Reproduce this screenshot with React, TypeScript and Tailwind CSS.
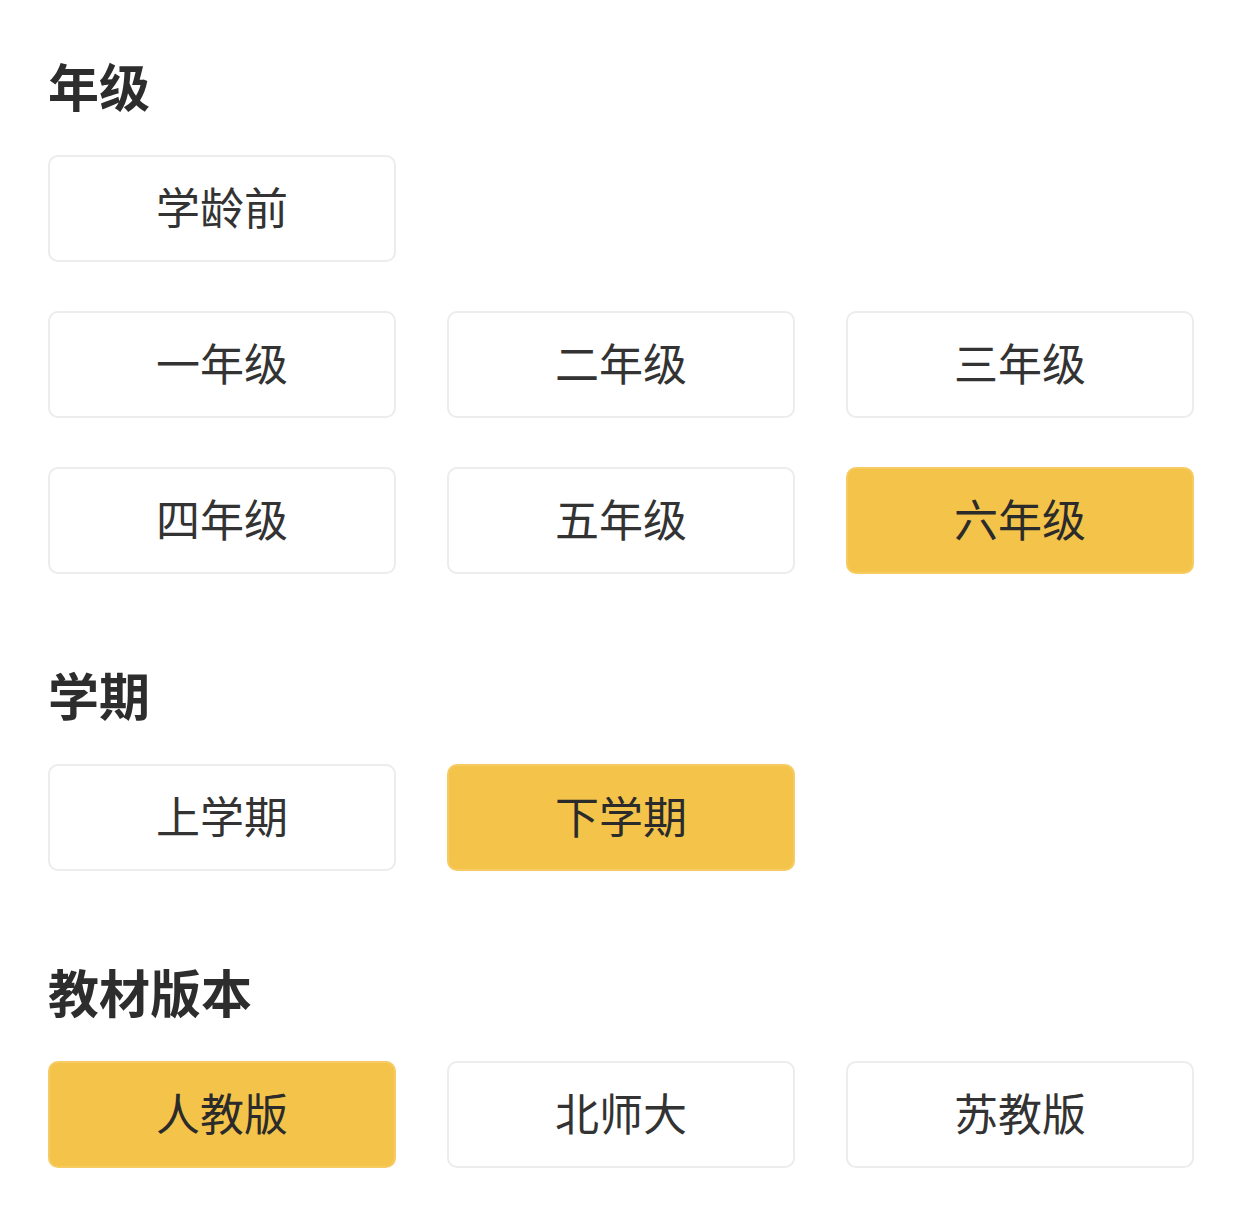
import { useState } from "react";

const GRADES = ["学龄前", null, null, "一年级", "二年级", "三年级", "四年级", "五年级", "六年级"];
const TERMS = ["上学期", "下学期"];
const EDITIONS = ["人教版", "北师大", "苏教版"];

function Option({ label, active, onClick }: { label: string; active: boolean; onClick: () => void }) {
  return (
    <button
      type="button"
      onClick={onClick}
      className={
        active
          ? "h-[107px] pb-[5px] rounded-[10px] border-2 border-[#f6cb63] bg-[#f4c34a] text-[44px] leading-none text-[#2b2b2b]"
          : "h-[107px] pb-[5px] rounded-[10px] border-2 border-[#ececec] bg-white text-[44px] leading-none text-[#333]"
      }
    >
      {label}
    </button>
  );
}

function Section({ title, children }: { title: string; children: React.ReactNode }) {
  return (
    <section className="flex flex-col gap-[43px]">
      <h2 className="pb-[4px] text-[51px] leading-[46px] font-bold text-[#2d2d2d]">{title}</h2>
      <div className="grid grid-cols-3 gap-x-[51px] gap-y-[49px]">{children}</div>
    </section>
  );
}

export default function App() {
  const [grade, setGrade] = useState("六年级");
  const [term, setTerm] = useState("下学期");
  const [edition, setEdition] = useState("人教版");

  return (
    <div
      className="min-h-[1206px] bg-white px-[48px] pt-[62px] flex flex-col gap-[97px]"
      style={{ fontFamily: '"Noto Sans CJK SC", "Noto Sans", sans-serif' }}
    >
      <Section title="年级">
        {GRADES.map((g, i) =>
          g ? <Option key={g} label={g} active={grade === g} onClick={() => setGrade(g)} /> : <div key={i} />
        )}
      </Section>
      <Section title="学期">
        {TERMS.map((t) => (
          <Option key={t} label={t} active={term === t} onClick={() => setTerm(t)} />
        ))}
      </Section>
      <Section title="教材版本">
        {EDITIONS.map((e) => (
          <Option key={e} label={e} active={edition === e} onClick={() => setEdition(e)} />
        ))}
      </Section>
    </div>
  );
}
